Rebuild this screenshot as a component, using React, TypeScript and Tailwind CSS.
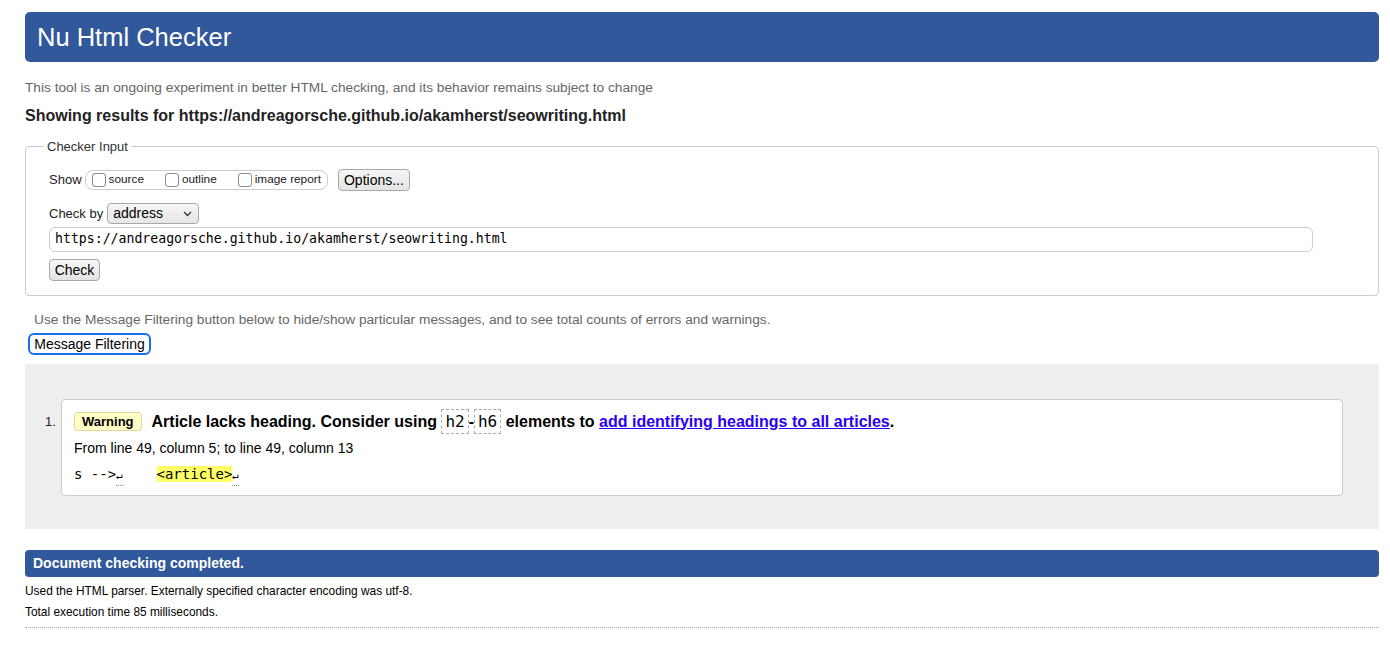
import React from 'react';

const sans = "font-['Liberation_Sans',Arial,sans-serif]";
const mono = "font-['DejaVu_Sans_Mono','Liberation_Mono',monospace]";

const Checkbox: React.FC<{ label: string }> = ({ label }) => (
  <label className="flex items-center gap-[3px] text-[11.8px] text-[#222]">
    <span className="w-[14px] h-[14px] rounded-[3px] border border-[#8a8a96] bg-white inline-block" />
    {label}
  </label>
);

const Btn: React.FC<{ children: React.ReactNode; className?: string }> = ({ children, className = '' }) => (
  <span
    className={`inline-flex items-center justify-center rounded-[4px] border border-[#a8a8a8] bg-gradient-to-b from-[#f6f6f6] to-[#e4e4e4] text-[14px] text-black leading-none ${className}`}
  >
    {children}
  </span>
);

const CodeBox: React.FC<{ children: React.ReactNode }> = ({ children }) => (
  <code className={`${mono} font-normal text-[16px] border border-dashed border-[#aaa] px-[3px] py-[2px] leading-[19px]`}>
    {children}
  </code>
);

const Eol: React.FC = () => (
  <span className="border-b border-dotted border-[#888] text-[11px] leading-[14px] pb-[3px]">↵</span>
);

export default function App() {
  return (
    <div className={`${sans} bg-white min-h-[660px] pl-[25px] pr-[11px] pt-[12px] text-[#222]`}>
      <h1 className="h-[50px] rounded-[5px] bg-[#31589a] text-white text-[25.5px] pl-[12px] flex items-center">
        Nu Html Checker
      </h1>

      <p className="mt-[18px] text-[13.7px] text-[#666] leading-[16px]">
        This tool is an ongoing experiment in better HTML checking, and its behavior remains subject to change
      </p>
      <h2 className="mt-[10px] text-[16px] font-bold leading-[20px]">
        Showing results for https://andreagorsche.github.io/akamherst/seowriting.html
      </h2>

      <fieldset className="mt-[11px] border border-[#ccc] rounded-[4px] pl-[23px] pr-[23px] pb-[13px] pt-[12px]">
        <legend className="px-[3px] ml-[-5px] text-[13px] text-[#333]">Checker Input</legend>

        <div className="flex items-center h-[22px] text-[13px]">
          <span className="mr-[3px]">Show</span>
          <div className="flex items-center h-[20px] border border-[#ccc] rounded-[8px] pl-[6px] pr-[6px] gap-[21px]">
            <Checkbox label="source" />
            <Checkbox label="outline" />
            <Checkbox label="image report" />
          </div>
          <Btn className="ml-[10px] h-[22px] w-[72px]">Options...</Btn>
        </div>

        <div className="flex items-center mt-[12px] h-[22px] text-[13px]">
          <span className="mr-[4px]">Check by</span>
          <span className="inline-flex items-center justify-between h-[21px] w-[92px] rounded-[4px] border border-[#a8a8a8] bg-gradient-to-b from-[#f6f6f6] to-[#e6e6e6] pl-[5px] pr-[6px] text-[14px] text-black">
            address
            <svg width="9" height="6" viewBox="0 0 9 6" fill="none">
              <path d="M1 1l3.5 3.5L8 1" stroke="#333" strokeWidth="1.3" />
            </svg>
          </span>
        </div>

        <div
          className={`${mono} mt-[2px] h-[25px] w-[1264px] rounded-[6px] border border-[#ccc] flex items-center pl-[5px] text-[13.2px] text-black`}
        >
          https://andreagorsche.github.io/akamherst/seowriting.html
        </div>

        <Btn className="mt-[7px] h-[22px] w-[51px]">Check</Btn>
      </fieldset>

      <p className="mt-[16px] ml-[9px] text-[13.7px] text-[#666] leading-[16px]">
        Use the Message Filtering button below to hide/show particular messages, and to see total counts of errors and warnings.
      </p>
      <div className="mt-[4px] ml-[3px] h-[22px]">
        <span className="inline-flex items-center justify-center h-[22px] w-[123px] border-2 border-[#1a6fe8] rounded-[6px] bg-white text-[14px] text-black">
          Message Filtering
        </span>
      </div>

      <div className="mt-[10px] bg-[#eee] h-[165px] pt-[35px] pl-[20px] pr-[36px]">
        <ol className="flex">
          <li className="flex w-full">
            <span className="text-[13px] w-[16px] pt-[16px] leading-[14px]">1.</span>
            <div className="flex-1 bg-white border border-[#ccc] rounded-[4px] h-[97px] pl-[12px] pt-[9px]">
              <div className="flex items-center h-[26px]">
                <span className="inline-flex items-center h-[19px] px-[7px] rounded-[4px] border border-[#ddd89a] bg-[#ffffc6] text-[13px] font-bold text-black">
                  Warning
                </span>
                <span className="ml-[10px] text-[16px] font-bold text-black">
                  Article lacks heading. Consider using <CodeBox>h2</CodeBox>
                  -
                  <CodeBox>h6</CodeBox> elements to{' '}
                  <a className="text-[#2a00f5] underline">add identifying headings to all articles</a>.
                </span>
              </div>
              <p className="mt-[5px] text-[14px] text-black leading-[16px]">From line 49, column 5; to line 49, column 13</p>
              <p className={`${mono} mt-[9px] text-[14px] text-black leading-[19px] whitespace-pre`}>
                {'s -->'}
                <Eol />
                {'    '}
                <span className="bg-[#ffff66]">{'<article>'}</span>
                <Eol />
              </p>
            </div>
          </li>
        </ol>
      </div>

      <div className="mt-[21px] h-[27px] rounded-[4px] bg-[#31589a] text-white text-[14px] font-bold flex items-center pl-[8px]">
        Document checking completed.
      </div>
      <p className="mt-[8px] text-[11.9px] text-black leading-[13px]">
        Used the HTML parser. Externally specified character encoding was utf-8.
      </p>
      <p className="mt-[8px] text-[11.9px] text-black leading-[13px]">Total execution time 85 milliseconds.</p>
      <div className="mt-[8px] border-b border-dotted border-[#aaa]" />
    </div>
  );
}
